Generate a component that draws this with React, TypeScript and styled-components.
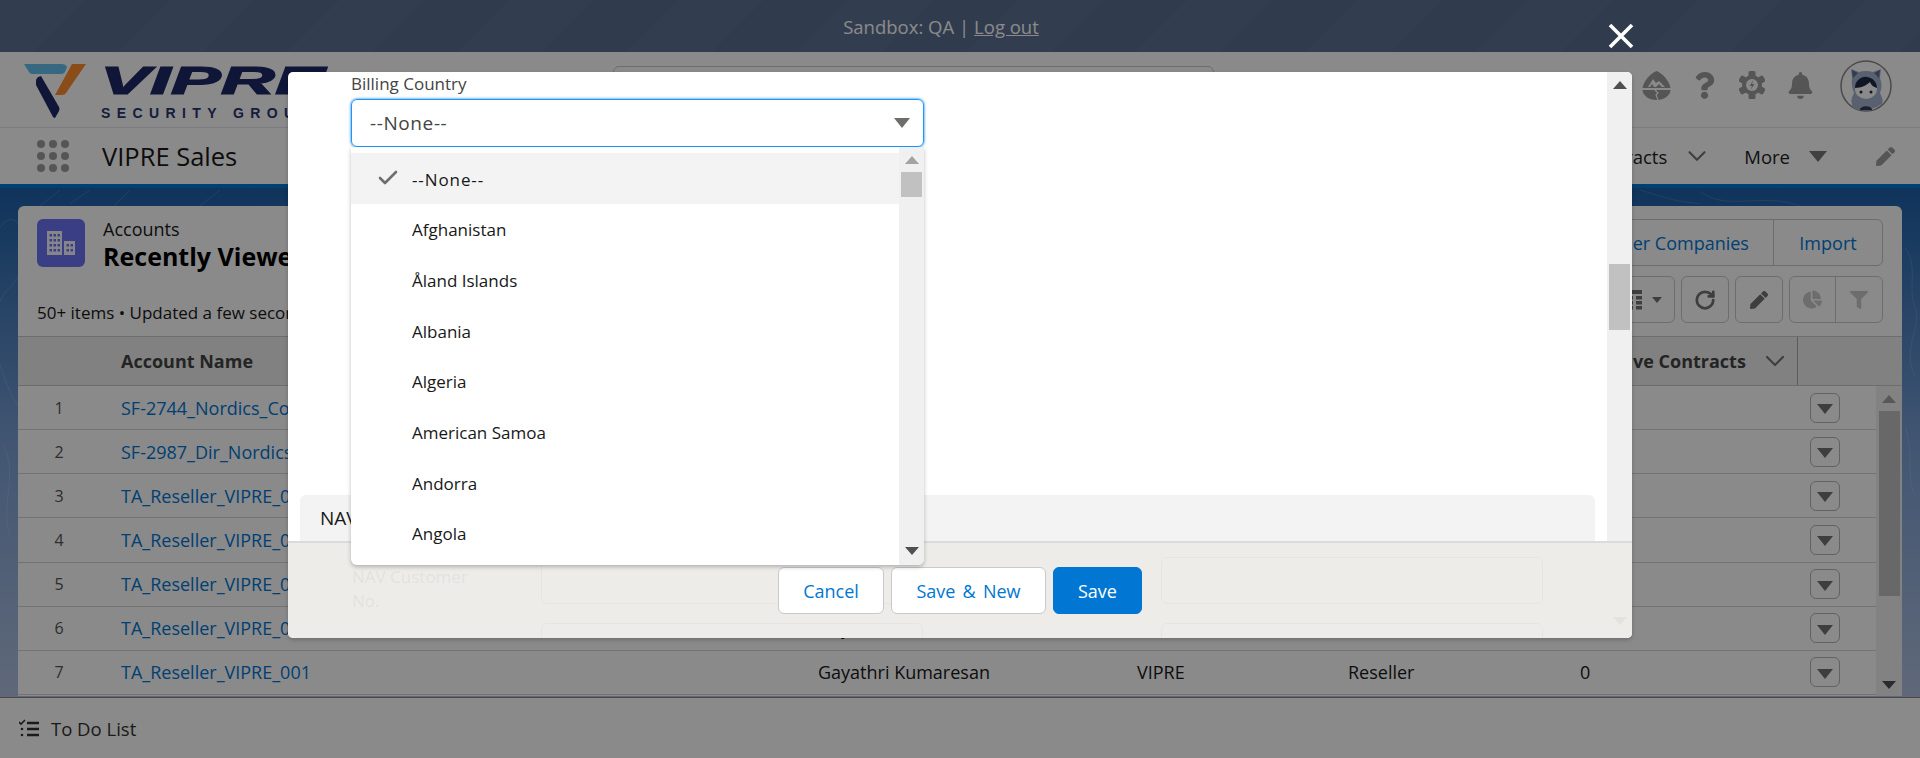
import styled, { createGlobalStyle } from 'styled-components';
import { Check, ChevronDown, RotateCw } from 'lucide-react';
import { FaBell, FaChartPie, FaFilter, FaPen, FaQuestion } from 'react-icons/fa';

const GlobalStyle = createGlobalStyle`
  html, body {
    margin: 0;
    padding: 0;
    height: 100%;
    overflow: hidden;
    font-family: "Open Sans", "Noto Sans", sans-serif;
    color: #181818;
  }
  * {
    box-sizing: border-box;
  }
`;

const Page = styled.div`
  position: relative;
  width: 1920px;
  height: 758px;
  overflow: hidden;
  display: flex;
  flex-direction: column;
  background: #fff;
`;

const SandboxBar = styled.div`
  height: 52px;
  flex: none;
  display: flex;
  align-items: center;
  justify-content: center;
  gap: 5px;
  padding-right: 38px;
  font-size: 18.5px;
  color: #fff;
  background: repeating-linear-gradient(135deg, #5d7194 0 60px, #5a6e90 60px 120px);
`;

const LogOut = styled.a`
  color: #fff;
  text-decoration: underline;
`;

const Header = styled.header`
  height: 76px;
  flex: none;
  display: flex;
  align-items: flex-start;
  padding-left: 24px;
  background: #fff;
  border-bottom: 1px solid #e2e6ee;
`;

const LogoMark = styled.svg`
  width: 330px;
  height: 60px;
  margin-top: 9px;
  flex: none;
`;

const Search = styled.div`
  width: 601px;
  height: 40px;
  margin: 14px 0 0 259px;
  border: 1px solid #c9c9c9;
  border-radius: 6px;
  flex: none;
`;

const GlobalActions = styled.div`
  margin-left: auto;
  display: flex;
  align-items: center;
  height: 75px;
  padding-right: 28px;
  color: #9e9e9e;
`;

const ActionSlot = styled.div`
  width: 48px;
  display: flex;
  justify-content: center;
  font-size: 27px;
  margin-top: -9px;
`;

const Avatar = styled.svg`
  width: 52px;
  height: 52px;
  margin: -8px 0 0 16px;
`;

const NavBar = styled.nav`
  height: 56px;
  flex: none;
  display: flex;
  align-items: center;
  padding: 0 25px 0 37px;
  background: #fff;
`;

const Waffle = styled.div`
  width: 32px;
  display: grid;
  grid-template-columns: repeat(3, 8px);
  gap: 4px;
  margin-right: 33px;
  & > span {
    width: 8px;
    height: 8px;
    border-radius: 50%;
    background: #9e9e9e;
  }
`;

const AppName = styled.div`
  font-size: 25.5px;
`;

const NavItems = styled.div`
  margin-left: auto;
  display: flex;
  align-items: center;
  font-size: 18.5px;
  color: #222;
`;

const NavChevron = styled(ChevronDown)`
  width: 30px;
  height: 30px;
  margin: 0 32px 0 15px;
  color: #777;
`;

const NavCaret = styled.span`
  width: 0;
  height: 0;
  margin: 0 49px 0 19px;
  border-left: 9px solid transparent;
  border-right: 9px solid transparent;
  border-top: 11px solid #777;
`;

const Main = styled.main`
  position: relative;
  flex: 1;
  min-height: 0;
  padding: 18px 18px 1px;
  border-top: 4px solid #0176d3;
  background: linear-gradient(180deg, #1d60a8 0%, #7a9fd4 50%, #b0c1e0 100%);
`;

const Topo = styled.svg`
  position: absolute;
  inset: 0;
  width: 100%;
  height: 100%;
`;

const Card = styled.section`
  position: relative;
  height: 100%;
  display: flex;
  flex-direction: column;
  background: #fff;
  border-radius: 6px 6px 0 0;
`;

const CardHead = styled.div`
  padding: 13px 19px 13px;
  display: flex;
  flex-direction: column;
  gap: 9px;
  height: 130px;
`;

const HeadRow = styled.div`
  height: 48px;
  display: flex;
  align-items: flex-start;
  justify-content: space-between;
`;

const TitleBlock = styled.div`
  display: flex;
  gap: 18px;
`;

const ObjectIcon = styled.div`
  width: 48px;
  height: 48px;
  border-radius: 6px;
  background: #6c74f5;
  display: flex;
  align-items: center;
  justify-content: center;
`;

const Eyebrow = styled.div`
  font-size: 18px;
  line-height: 20px;
`;

const ListTitle = styled.div`
  font-size: 25px;
  line-height: 34px;
  font-weight: 700;
  color: #000;
`;

const ButtonGroup = styled.div`
  display: flex;
  height: 47px;
  border: 1px solid #c9c9c9;
  border-radius: 6px;
  background: #fff;
`;

const toneColors = { link: '#0176d3', icon: '#747474', faded: '#c9c9c9' };

const GroupButton = styled.div<{ $width: number; $tone: 'link' | 'icon' | 'faded' }>`
  width: ${(p) => p.$width}px;
  display: flex;
  align-items: center;
  justify-content: center;
  gap: 10px;
  font-size: 18px;
  color: ${(p) => toneColors[p.$tone]};
  & + & {
    border-left: 1px solid #c9c9c9;
  }
`;

const SmallCaret = styled.span`
  border-left: 5px solid transparent;
  border-right: 5px solid transparent;
  border-top: 6px solid #747474;
`;

const IconButtons = styled.div`
  display: flex;
  gap: 6px;
`;

const SubRow = styled(HeadRow)`
  height: 47px;
  align-items: flex-end;
`;

const Meta = styled.div`
  font-size: 17px;
  line-height: 20px;
`;

const TableHeader = styled.div`
  display: grid;
  grid-template-columns: 103px 697px 319px 211px 232px 217px 79px 26px;
  height: 50px;
  flex: none;
  align-items: center;
  background: #efefef;
  border-top: 1px solid #c9c9c9;
  border-bottom: 1px solid #c9c9c9;
  font-size: 18px;
  font-weight: 700;
  color: #444;
`;

const HeaderCell = styled.div<{ $inset?: number }>`
  display: flex;
  align-items: center;
  gap: 13px;
  padding-left: ${(p) => p.$inset ?? 0}px;
  white-space: nowrap;
  height: 100%;
`;

const LastHeaderCell = styled(HeaderCell)`
  border-left: 1px solid #a8a8a8;
`;

const TableWrap = styled.div`
  flex: 1;
  min-height: 0;
  display: flex;
`;

const Rows = styled.div`
  flex: 1;
  min-width: 0;
`;

const Row = styled.div`
  display: grid;
  grid-template-columns: 103px 697px 319px 211px 232px 217px 79px;
  height: 44.14px;
  align-items: center;
  border-bottom: 1px solid #d4d4d4;
  font-size: 18px;
  white-space: nowrap;
`;

const RowNum = styled.div`
  width: 82px;
  text-align: center;
  font-size: 16px;
  color: #555;
`;

const RowLink = styled.a`
  color: #0176d3;
`;

const RowMenu = styled.div`
  width: 30px;
  height: 30px;
  margin-left: 13px;
  border: 1px solid #b5b5b5;
  border-radius: 6px;
  display: flex;
  align-items: center;
  justify-content: center;
  padding-top: 3px;
  &::before {
    content: '';
    border-left: 8px solid transparent;
    border-right: 8px solid transparent;
    border-top: 10px solid #747474;
  }
`;

const ScrollTrack = styled.div<{ $width: number; $top: number; $bottom: number }>`
  width: ${(p) => p.$width}px;
  flex: none;
  display: flex;
  flex-direction: column;
  align-items: center;
  padding: ${(p) => p.$top}px 0 ${(p) => p.$bottom}px;
  background: #f0f0f0;
`;

const Arrow = styled.span<{ $dir: 'up' | 'down'; $color: string; $auto?: boolean }>`
  width: 0;
  height: 0;
  flex: none;
  margin-top: ${(p) => (p.$auto ? 'auto' : '0')};
  border-left: 7px solid transparent;
  border-right: 7px solid transparent;
  ${(p) => (p.$dir === 'up' ? `border-bottom: 8px solid ${p.$color};` : `border-top: 8px solid ${p.$color};`)}
`;

const Thumb = styled.div<{ $offset: number; $height: number }>`
  width: 21px;
  height: ${(p) => p.$height}px;
  margin-top: ${(p) => p.$offset}px;
  flex: none;
  background: #c1c1c1;
`;

const TodoBar = styled.footer`
  height: 61px;
  flex: none;
  display: flex;
  align-items: center;
  gap: 12px;
  padding: 0 0 0 19px;
  background: #fff;
  border-top: 1px solid #8a8a8a;
  font-size: 18.5px;
  color: #333;
`;

const Backdrop = styled.div`
  position: absolute;
  inset: 0;
  background: rgba(0, 0, 0, 0.46);
`;

const ModalFrame = styled.div`
  position: absolute;
  top: 72px;
  left: 288px;
  width: 1344px;
  height: 566px;
`;

const CloseButton = styled.svg`
  position: absolute;
  top: -49px;
  right: -2px;
  width: 26px;
  height: 26px;
`;

const ModalBox = styled.div`
  position: relative;
  height: 100%;
  display: flex;
  overflow: hidden;
  border-radius: 5px;
  background: #fff;
  box-shadow: 0 2px 4px rgba(0, 0, 0, 0.2);
`;

const FormPane = styled.div`
  flex: 1;
  min-width: 0;
  padding-left: 12px;
  overflow: hidden;
`;

const Field = styled.div`
  position: relative;
  width: 573px;
  margin-left: 51px;
`;

const FieldLabel = styled.div`
  height: 27px;
  line-height: 24px;
  font-size: 17px;
  color: #444;
`;

const SelectBox = styled.div`
  height: 48px;
  display: flex;
  align-items: center;
  justify-content: space-between;
  padding: 0 13px 0 18px;
  border: 1px solid #1b96ff;
  border-radius: 6px;
  box-shadow: 0 0 3px #0176d3;
  font-size: 19px;
  letter-spacing: 0.6px;
  color: #444;
`;

const SelectCaret = styled.span`
  border-left: 8px solid transparent;
  border-right: 8px solid transparent;
  border-top: 10px solid #706e6b;
`;

const Menu = styled.div`
  position: absolute;
  z-index: 3;
  top: 75px;
  left: 0;
  width: 100%;
  height: 418px;
  display: flex;
  background: #fff;
  border-radius: 0 0 6px 6px;
  box-shadow: 0 2px 4px rgba(0, 0, 0, 0.25);
  overflow: hidden;
`;

const MenuList = styled.ul`
  flex: 1;
  margin: 0;
  padding: 6px 0 0;
  list-style: none;
`;

const MenuItem = styled.li<{ $selected?: boolean }>`
  height: 50.67px;
  display: flex;
  align-items: center;
  padding: 2px 0 0 61px;
  position: relative;
  font-size: 17px;
  letter-spacing: ${(p) => (p.$selected ? '0.9px' : '0')};
  color: #181818;
  background: ${(p) => (p.$selected ? '#f3f3f3' : 'transparent')};
`;

const CheckIcon = styled(Check)`
  position: absolute;
  left: 24px;
  top: 13px;
  width: 26px;
  height: 24px;
  color: #706e6b;
`;

const Section = styled.div`
  width: 1295px;
  height: 46px;
  margin-top: 348px;
  padding: 0 0 0 20px;
  display: flex;
  align-items: center;
  border-radius: 6px 6px 0 0;
  background: #f3f3f3;
  font-size: 19px;
  color: #181818;
`;

const GhostRow = styled.div<{ $top: number }>`
  display: grid;
  grid-template-columns: 189px 382px 238px 382px;
  margin: ${(p) => p.$top}px 0 0 52px;
`;

const GhostLabel = styled.div`
  font-size: 17px;
  line-height: 24px;
  padding-top: 8px;
  color: #444;
`;

const GhostInput = styled.div<{ $col: number }>`
  grid-column: ${(p) => p.$col};
  height: 47px;
  border: 1px solid #8f8f8f;
  border-radius: 6px;
`;

const ModalFooter = styled.div`
  position: absolute;
  z-index: 2;
  left: 0;
  right: 0;
  bottom: 0;
  height: 97px;
  padding-top: 24px;
  display: flex;
  justify-content: center;
  gap: 7px;
  border-top: 2px solid #dddbda;
  background: rgba(236, 235, 232, 0.94);
`;

const FooterButton = styled.button<{ $width: number; $primary?: boolean }>`
  width: ${(p) => p.$width}px;
  height: 47px;
  padding: 0;
  font: inherit;
  font-size: 18px;
  word-spacing: 2.5px;
  border-radius: 6px;
  border: 1px solid ${(p) => (p.$primary ? '#0176d3' : '#c9c9c9')};
  background: ${(p) => (p.$primary ? '#0176d3' : '#fff')};
  color: ${(p) => (p.$primary ? '#fff' : '#0176d3')};
`;

const countries = ['Afghanistan', 'Åland Islands', 'Albania', 'Algeria', 'American Samoa', 'Andorra', 'Angola'];

const accounts = [
  'SF-2744_Nordics_Company',
  'SF-2987_Dir_Nordics_Company',
  'TA_Reseller_VIPRE_006',
  'TA_Reseller_VIPRE_005',
  'TA_Reseller_VIPRE_004',
  'TA_Reseller_VIPRE_002',
  'TA_Reseller_VIPRE_001',
];

function Logo() {
  return (
    <LogoMark viewBox="24 60 330 60">
      <path d="M24 63h37q5 0 6 3l-2 5q-1 2-4 2H32q-2 0-3-2z" fill="#66c0f0" />
      <path d="M72 63h14L66 92q-1 2-4 2h-7z" fill="#ff8f30" />
      <path d="M36 80q0-4 5-5l18 31q1 2 0 4l-4 7q-1 0-2-1L36 84z" fill="#1e2968" />
      <text x="100" y="93" fontFamily="Liberation Sans" fontWeight="700" fontStyle="italic" fontSize="39" textLength="225" lengthAdjust="spacingAndGlyphs" fill="#1e2968" stroke="#1e2968" strokeWidth="1.2">VIPRE</text>
      <text x="101" y="117" fontFamily="Liberation Sans" fontWeight="700" fontSize="14" letterSpacing="6.4" fill="#2a3570">SECURITY GROUP</text>
    </LogoMark>
  );
}

function TrailIcon() {
  return (
    <svg width="29" height="29" viewBox="0 0 29 29">
      <path d="M14.5 0C20 2 27 9 28.5 17H.5C2 9 9 2 14.5 0z" fill="currentColor" />
      <path d="M.5 19h28c0 5-6 10-14 10S.5 24 .5 19z" fill="currentColor" />
      <path d="M6 16l5-8 3 4 3-2 6 6h-3l-3-3-3 3h-2l-2-3-2 3z" fill="#fff" />
      <path d="M13 19l3 3-2 2 2 5" stroke="#fff" strokeWidth="1.2" fill="none" />
    </svg>
  );
}

function GearIcon() {
  const teeth = [0, 60, 120, 180, 240, 300];
  return (
    <svg width="26" height="28" viewBox="0 0 26 28">
      <g fill="currentColor">
        <circle cx="13" cy="14" r="10" />
        {teeth.map((a) => (
          <rect key={a} x="9.5" y="0" width="7" height="7" rx="1.5" transform={`rotate(${a} 13 14)`} />
        ))}
      </g>
      <circle cx="13" cy="14" r="6" fill="#fff" />
      <path d="M14.5 9l-4 6h2.5l-1.5 4 4-6h-2.5z" fill="currentColor" />
    </svg>
  );
}

function AvatarImage() {
  return (
    <Avatar viewBox="0 0 52 52">
      <circle cx="26" cy="26" r="25" fill="#fff" stroke="#8a8a8a" strokeWidth="1.5" />
      <path d="M12 18l-1-9 8 3q7-2 14 0l8-3-1 9q3 8 0 15 4 8 2 11-9 6-20 6T12 44q-2-3 2-11-3-7-2-15z" fill="#a4b2cf" />
      <path d="M12 10l6 3-5 5zM40 10l-6 3 5 5z" fill="#5d6f8e" />
      <ellipse cx="26" cy="29" rx="11" ry="10" fill="#fff" />
      <path d="M15 28c0-8 7-12 12-11 6 1 10 5 10 11-4-1-6-3-7-6-3 3-9 6-15 6z" fill="#1e2a45" />
      <circle cx="21" cy="32" r="1.5" fill="#1e2a45" />
      <circle cx="31" cy="32" r="1.5" fill="#1e2a45" />
      <path d="M20 50c0-5 12-5 12 0z" fill="#2d3c5c" />
    </Avatar>
  );
}

function BuildingIcon() {
  return (
    <svg width="28" height="24" viewBox="0 0 28 24" fill="#fff">
      <path d="M0 0h15v24H0zM17 10h11v14H17z" opacity=".95" />
      <g fill="#6c74f5">
        {[3, 8, 13, 18].map((y) => [2.5, 6.5, 10.5].map((x) => <rect key={`${x}-${y}`} x={x} y={y} width="2.5" height="2.5" />))}
        {[13, 18].map((y) => [19.5, 23.5].map((x) => <rect key={`${x}-${y}`} x={x} y={y} width="2.5" height="2.5" />))}
      </g>
    </svg>
  );
}

function GridIcon() {
  return (
    <svg width="24" height="20" viewBox="0 0 24 20" fill="currentColor">
      <rect width="24" height="4" />
      {[6, 11, 16].map((y) => [0, 9, 18].map((x) => <rect key={`${x}-${y}`} x={x} y={y} width="6" height="3.5" />))}
    </svg>
  );
}

function TodoIcon() {
  return (
    <svg width="20" height="18" viewBox="0 0 20 18" fill="none" stroke="#333">
      <path d="M0 3l2 2 4-4" strokeWidth="1.6" />
      <path d="M8 4h12M8 10h12M8 16h12" strokeWidth="2.4" />
      <circle cx="3" cy="10" r="1.3" fill="#333" stroke="none" />
      <circle cx="3" cy="16" r="1.3" fill="#333" stroke="none" />
    </svg>
  );
}

export default function App() {
  return (
    <Page>
      <GlobalStyle />
      <SandboxBar>
        <span>Sandbox: QA |</span>
        <LogOut>Log out</LogOut>
      </SandboxBar>

      <Header>
        <Logo />
        <Search />
        <GlobalActions>
          <ActionSlot><TrailIcon /></ActionSlot>
          <ActionSlot><FaQuestion /></ActionSlot>
          <ActionSlot><GearIcon /></ActionSlot>
          <ActionSlot><FaBell /></ActionSlot>
          <AvatarImage />
        </GlobalActions>
      </Header>

      <NavBar>
        <Waffle>
          {Array.from({ length: 9 }).map((_, i) => <span key={i} />)}
        </Waffle>
        <AppName>VIPRE Sales</AppName>
        <NavItems>
          <span>Contracts</span>
          <NavChevron strokeWidth={1.7} />
          <span>More</span>
          <NavCaret />
          <FaPen color="#9e9e9e" size={19} />
        </NavItems>
      </NavBar>

      <Main>
        <Topo viewBox="0 0 1920 513" preserveAspectRatio="none" fill="none" stroke="#fff" strokeOpacity="0.14">
          <path d="M0 40c20-30 40 30 10 60s-10 90 8 120M4 260c14 30-4 60 6 90M1640 2c40 12 30 10 60 14M1500 2l-20 16M1560 2l-14 16" />
          <path d="M60 2l-20 16M90 2L70 16M130 2l-16 16M220 2l-20 16M1700 4c30 20 60 0 100 14M1905 60c14 20 2 40 10 60s-14 40 0 70M1905 240c10 30 0 50 10 70" />
        </Topo>
        <Card>
          <CardHead>
            <HeadRow>
              <TitleBlock>
                <ObjectIcon><BuildingIcon /></ObjectIcon>
                <div>
                  <Eyebrow>Accounts</Eyebrow>
                  <ListTitle>Recently Viewed</ListTitle>
                </div>
              </TitleBlock>
              <ButtonGroup>
                <GroupButton $width={210} $tone="link">Partner Companies</GroupButton>
                <GroupButton $width={109} $tone="link">Import</GroupButton>
              </ButtonGroup>
            </HeadRow>
            <SubRow>
              <Meta>50+ items • Updated a few seconds ago</Meta>
              <IconButtons>
                <ButtonGroup>
                  <GroupButton $width={68} $tone="icon"><GridIcon /><SmallCaret /></GroupButton>
                </ButtonGroup>
                <ButtonGroup>
                  <GroupButton $width={46} $tone="icon"><RotateCw size={22} strokeWidth={3} /></GroupButton>
                </ButtonGroup>
                <ButtonGroup>
                  <GroupButton $width={46} $tone="icon"><FaPen size={18} /></GroupButton>
                </ButtonGroup>
                <ButtonGroup>
                  <GroupButton $width={45} $tone="faded"><FaChartPie size={19} /></GroupButton>
                  <GroupButton $width={47} $tone="faded"><FaFilter size={18} /></GroupButton>
                </ButtonGroup>
              </IconButtons>
            </SubRow>
          </CardHead>

          <TableHeader>
            <div />
            <HeaderCell>Account Name</HeaderCell>
            <div />
            <div />
            <div />
            <HeaderCell $inset={18}>Active Contracts<ChevronDown size={32} strokeWidth={1.6} color="#747474" /></HeaderCell>
            <LastHeaderCell />
            <div />
          </TableHeader>

          <TableWrap>
            <Rows>
              {accounts.map((name, i) => (
                <Row key={name}>
                  <RowNum>{i + 1}</RowNum>
                  <RowLink>{name}</RowLink>
                  <span>Gayathri Kumaresan</span>
                  <span>VIPRE</span>
                  <span>Reseller</span>
                  <span>0</span>
                  <RowMenu />
                </Row>
              ))}
            </Rows>
            <ScrollTrack $width={26} $top={9} $bottom={7}>
              <Arrow $dir="up" $color="#a3a3a3" />
              <Thumb $offset={8} $height={185} />
              <Arrow $dir="down" $color="#505050" $auto />
            </ScrollTrack>
          </TableWrap>
        </Card>
      </Main>

      <TodoBar>
        <TodoIcon />
        <span>To Do List</span>
      </TodoBar>

      <Backdrop />

      <ModalFrame>
        <CloseButton viewBox="0 0 26 26" fill="none" stroke="#fff" strokeWidth="3.6">
          <path d="M2 2l22 22M24 2L2 24" />
        </CloseButton>
        <ModalBox>
          <FormPane>
            <Field>
              <FieldLabel>Billing Country</FieldLabel>
              <SelectBox>
                <span>--None--</span>
                <SelectCaret />
              </SelectBox>
              <Menu>
                <MenuList>
                  <MenuItem $selected>
                    <CheckIcon strokeWidth={2.6} />
                    --None--
                  </MenuItem>
                  {countries.map((c) => <MenuItem key={c}>{c}</MenuItem>)}
                </MenuList>
                <ScrollTrack $width={25} $top={9} $bottom={10}>
                  <Arrow $dir="up" $color="#a3a3a3" />
                  <Thumb $offset={8} $height={25} />
                  <Arrow $dir="down" $color="#505050" $auto />
                </ScrollTrack>
              </Menu>
            </Field>
            <Section>NAV Details</Section>
            <GhostRow $top={16}>
              <GhostLabel>NAV Customer<br />No.</GhostLabel>
              <GhostInput $col={2} />
              <GhostInput $col={4} />
            </GhostRow>
            <GhostRow $top={10}>
              <GhostLabel />
              <GhostInput $col={2} />
              <GhostInput $col={4} />
            </GhostRow>
          </FormPane>
          <ScrollTrack $width={25} $top={9} $bottom={13}>
            <Arrow $dir="up" $color="#505050" />
            <Thumb $offset={175} $height={66} />
            <Arrow $dir="down" $color="#505050" $auto />
          </ScrollTrack>
          <ModalFooter>
            <FooterButton $width={106}>Cancel</FooterButton>
            <FooterButton $width={155}>Save &amp; New</FooterButton>
            <FooterButton $width={89} $primary>Save</FooterButton>
          </ModalFooter>
        </ModalBox>
      </ModalFrame>
    </Page>
  );
}
